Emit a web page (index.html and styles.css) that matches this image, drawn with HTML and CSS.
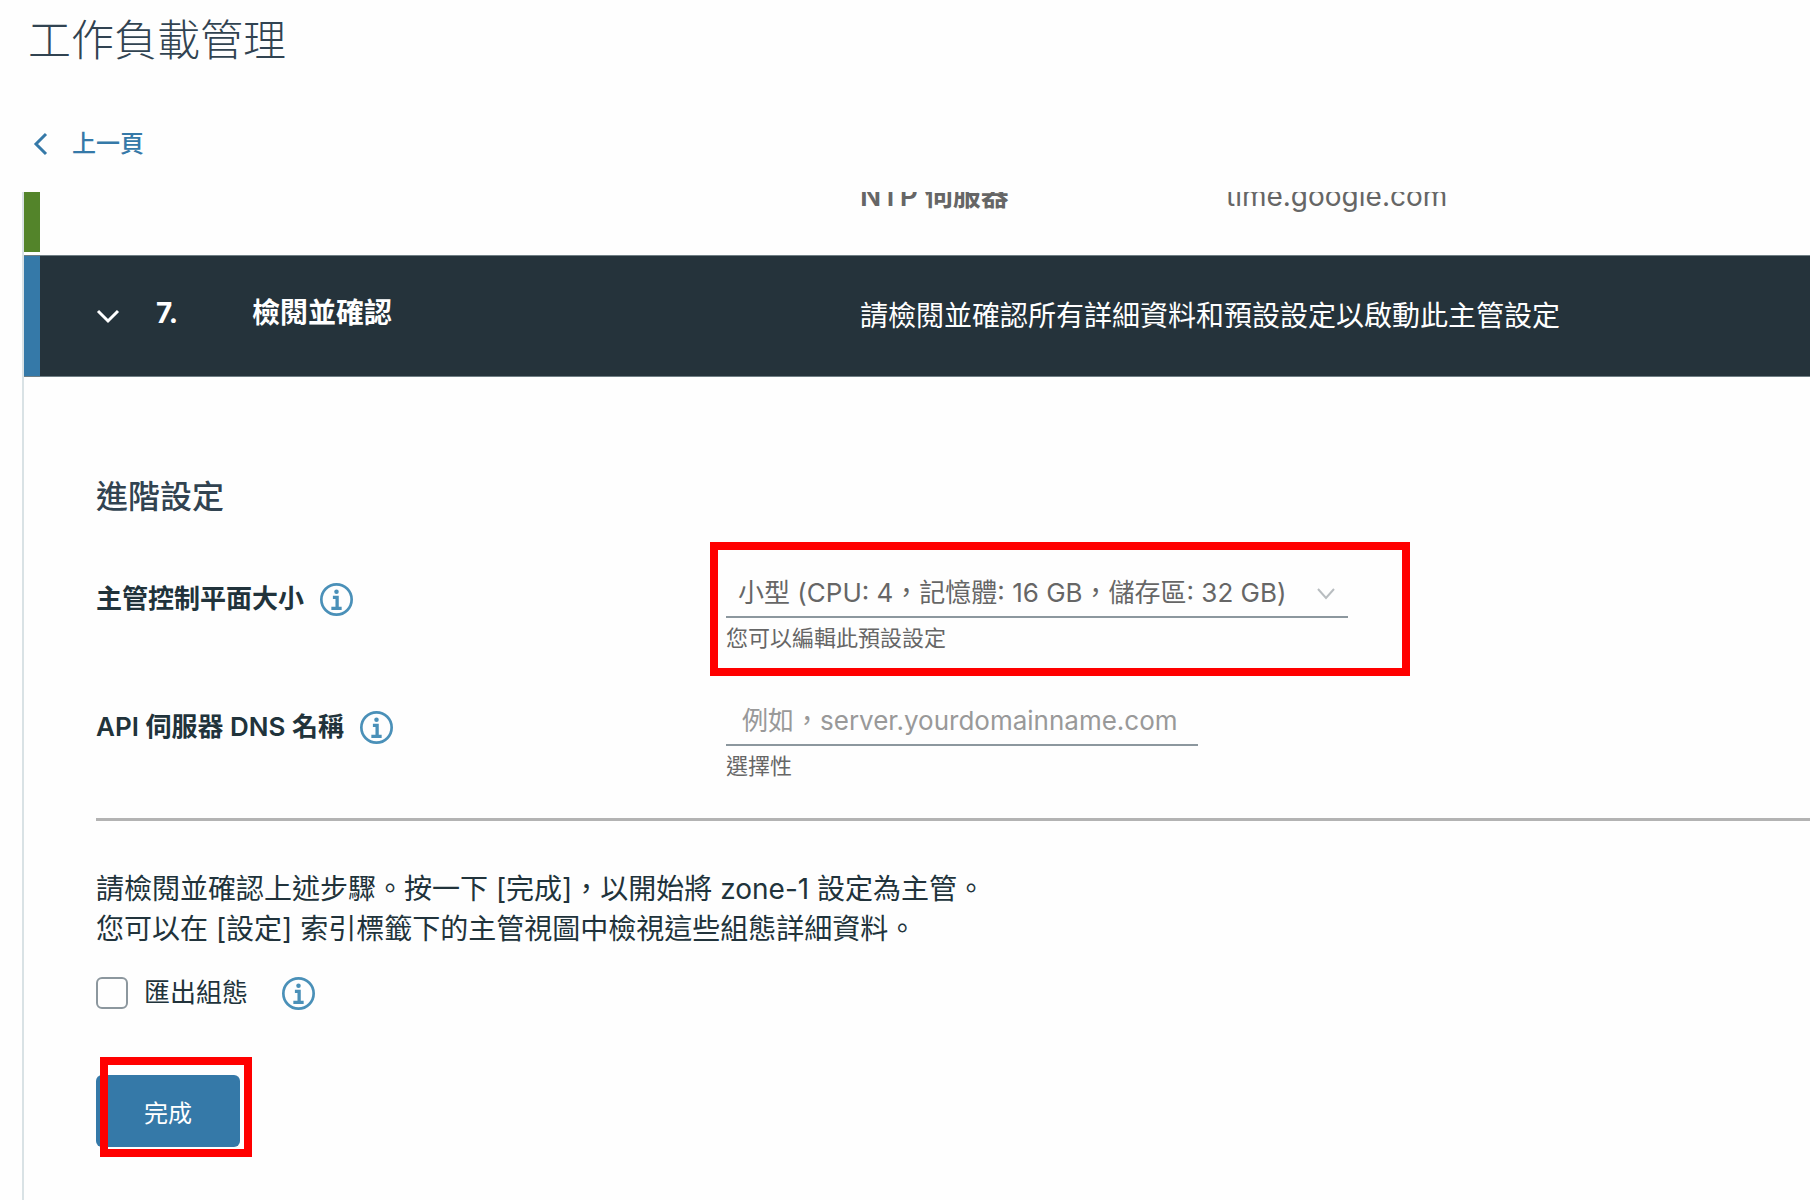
FILE: index.html
```html
<!DOCTYPE html>
<html lang="zh-Hant">
<head>
   <meta charset="utf-8">
   <title>工作負載管理</title>
   <meta name="viewport" content="width=device-width, initial-scale=1">
   <link rel="stylesheet" href="styles.css">
</head>
<body>
   <h1>工作負載管理</h1>
   <a class="back" href="#">
      <svg width="16" height="24" viewBox="0 0 16 24"><path d="M14 2 L4 12 L14 22" fill="none" stroke="currentColor" stroke-width="3"/></svg>
      上一頁
   </a>

   <main class="stepper">
      <!-- Step 6, scrolled almost out of view -->
      <section class="step done">
         <dl class="summary">
            <dt>NTP 伺服器</dt>
            <dd>time.google.com</dd>
         </dl>
      </section>

      <!-- Step 7 -->
      <section class="step">
         <button class="step-header" type="button" aria-expanded="true">
            <svg class="caret" width="24" height="16" viewBox="0 0 24 16"><path d="M2 3 L12 13 L22 3" fill="none" stroke="currentColor" stroke-width="3"/></svg>
            <span class="step-number">7.</span>
            <span class="step-title">檢閱並確認</span>
            <span class="step-description">請檢閱並確認所有詳細資料和預設設定以啟動此主管設定</span>
         </button>

         <form class="step-content">
            <h2>進階設定</h2>

            <div class="form-row">
               <div class="label-cell">
                  <label for="planeSize">主管控制平面大小</label>
                  <svg class="info" viewBox="0 0 32 32"><use href="#infoIcon"/></svg>
               </div>
               <div class="control">
                  <div class="select-wrap">
                     <select id="planeSize">
                        <option>小型 (CPU: 4，記憶體: 16 GB，儲存區: 32 GB)</option>
                     </select>
                     <svg class="select-caret" width="18" height="12" viewBox="0 0 18 12"><path d="M1 1 L9 10 L17 1" fill="none" stroke="currentColor" stroke-width="2"/></svg>
                  </div>
                  <span class="helper">您可以編輯此預設設定</span>
                  <div class="highlight highlight-select"></div>
               </div>
            </div>

            <div class="form-row">
               <div class="label-cell">
                  <label for="dnsName">API 伺服器 DNS 名稱</label>
                  <svg class="info" viewBox="0 0 32 32"><use href="#infoIcon"/></svg>
               </div>
               <div class="control">
                  <input type="text" id="dnsName" placeholder="例如，server.yourdomainname.com">
                  <span class="helper">選擇性</span>
               </div>
            </div>

            <hr>

            <p>請檢閱並確認上述步驟。按一下 [完成]，以開始將 zone-1 設定為主管。<br>
               您可以在 [設定] 索引標籤下的主管視圖中檢視這些組態詳細資料。</p>

            <div class="export">
               <input type="checkbox" id="exportConfig">
               <label for="exportConfig">匯出組態</label>
               <svg class="info" viewBox="0 0 32 32"><use href="#infoIcon"/></svg>
            </div>

            <div class="actions">
               <button class="button" type="button">完成</button>
               <div class="highlight highlight-button"></div>
            </div>
         </form>
      </section>
   </main>

   <svg width="0" height="0" class="sprite">
      <symbol id="infoIcon" viewBox="0 0 32 32">
         <circle cx="16" cy="16" r="14.7" fill="none" stroke="currentColor" stroke-width="2.6"/>
         <circle cx="16" cy="8.4" r="2.2" fill="currentColor"/>
         <path d="M12.5 14 H16.6 V24.6 M11 24.6 H21" fill="none" stroke="currentColor" stroke-width="3.2"/>
      </symbol>
   </svg>
</body>
</html>
```
FILE: styles.css
```css
* {
   box-sizing: border-box;
}
body {
   margin: 0;
   min-height: 100vh;
   display: flex;
   flex-direction: column;
   background: #fefefe;
   color: #21333b;
   font-family: Inter, "Noto Sans CJK TC", sans-serif;
   font-size: 28px;
   line-height: 40px;
}
button, input, select {
   font-family: inherit;
}
h1 {
   margin: 12px 28px 0;
   color: #314351;
   font-size: 43px;
   font-weight: 300;
   line-height: 56px;
}
.back {
   display: flex;
   align-items: center;
   align-self: flex-start;
   gap: 24px;
   margin: 57px 32px 29px;
   padding: 4px 0;
   color: #3579a8;
   font-size: 24px;
   font-weight: 500;
   line-height: 30px;
   text-decoration: none;
}
.stepper {
   flex: 1;
   display: flex;
   flex-direction: column;
   margin-left: 22px;
   border-left: 2px solid #d9e2e5;
}
.step.done {
   display: flex;
   flex-direction: column;
   justify-content: flex-end;
   height: 60px;
   margin-bottom: 3px;
   border-left: 16px solid #53842a;
   overflow: hidden;
}
.summary {
   display: flex;
   margin: 0;
   padding: 0 0 36px 820px;
   color: #666;
}
.summary dt {
   width: 366px;
   font-weight: 600;
}
.summary dd {
   margin: 0;
}
.step-header {
   display: flex;
   align-items: center;
   width: 100%;
   height: 122px;
   padding: 0 0 0 72px;
   border: 0;
   border-top: 1px solid #6f7e84;
   border-bottom: 1px solid #6f7e84;
   background: #25333b;
   box-shadow: inset 16px 0 #3579a8;
   color: #fff;
   font-size: 28px;
   line-height: 40px;
   text-align: left;
}
.caret {
   margin-right: 36px;
}
.step-number,
.step-title {
   padding-bottom: 6px;
   font-weight: 700;
}
.step-number {
   width: 96px;
}
.step-title {
   width: 608px;
}
.step-content {
   padding: 100px 0 52px 72px;
}
h2 {
   margin: 0 0 42px;
   color: #314351;
   font-size: 32px;
   font-weight: 500;
   line-height: 40px;
}
.form-row {
   display: flex;
   min-height: 128px;
}
.label-cell {
   display: flex;
   align-items: center;
   gap: 16px;
   width: 630px;
   height: 80px;
   font-size: 26px;
   font-weight: 600;
}
.info {
   width: 33px;
   height: 33px;
   color: #4a90b8;
}
.control {
   position: relative;
   display: flex;
   flex-direction: column;
   align-items: flex-start;
   padding-top: 9px;
}
.select-wrap {
   position: relative;
   color: #b8bdc0;
}
.control select,
.control input {
   height: 50px;
   border: 0;
   border-bottom: 2px solid #8c979e;
   border-radius: 0;
   background: transparent;
   color: #666;
   font-size: 26px;
}
.control select {
   display: block;
   width: 622px;
   padding: 0 48px 0 12px;
   appearance: none;
}
.control input {
   width: 472px;
   padding: 0 16px;
}
.control input::placeholder {
   color: #999;
   opacity: 1;
}
.select-caret {
   position: absolute;
   right: 13px;
   top: 20px;
}
.helper {
   margin-top: 4px;
   color: #666;
   font-size: 22px;
   line-height: 32px;
}
.highlight {
   position: absolute;
   border: 8px solid #f00;
   pointer-events: none;
}
.highlight-select {
   left: -16px;
   top: -17px;
   width: 700px;
   height: 134px;
}
.highlight-button {
   left: 4px;
   top: -18px;
   width: 152px;
   height: 100px;
}
hr {
   margin: 3px 0 48px;
   border: 0;
   border-top: 3px solid #b3b3b3;
}
p {
   margin: 0;
}
.export {
   display: flex;
   align-items: center;
   margin: 24px 0 62px;
   font-size: 26px;
}
.export input {
   appearance: none;
   width: 32px;
   height: 32px;
   margin: 0 16px 0 0;
   border: 2px solid #8c979e;
   border-radius: 6px;
}
.export .info {
   margin-left: 34px;
}
.actions {
   position: relative;
}
.button {
   display: block;
   width: 144px;
   height: 72px;
   border: 0;
   border-radius: 6px;
   background: #3579a8;
   color: #fff;
   font-size: 24px;
}
.sprite {
   position: absolute;
}
```
